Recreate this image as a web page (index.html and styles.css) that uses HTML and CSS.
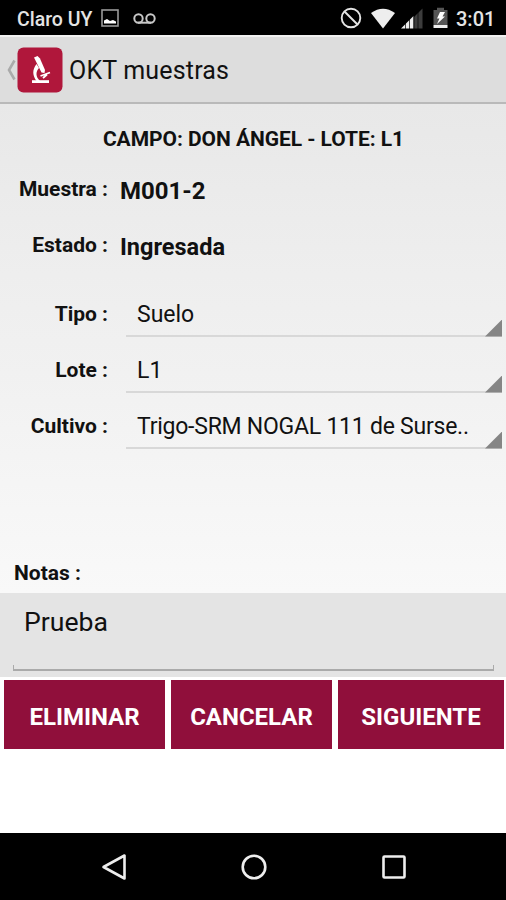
FILE: index.html
```html
<!DOCTYPE html>
<html lang="es">
<head>
<meta charset="utf-8">
<title>OKT muestras</title>
<link rel="stylesheet" href="styles.css">
</head>
<body>
<header class="status">
  <span class="carrier">Claro UY</span>
  <svg class="picture" width="18" height="18" viewBox="0 0 18 18"><rect x="1" y="1" width="16" height="16" fill="none" stroke="#999" stroke-width="1.6"/><path d="M3 14.500V11.500l3-1.500 3 2 3-1 3 1.500v2z" fill="#fff"/></svg>
  <svg class="voicemail" width="23" height="11" viewBox="0 0 23 11" fill="none" stroke="#c8c8c8" stroke-width="2"><circle cx="5.500" cy="5.500" r="4.200"/><circle cx="17.500" cy="5.500" r="4.200"/><path d="M5 9.700h13"/></svg>
  <div class="indicators">
    <svg width="22" height="22" viewBox="0 0 22 22" fill="none" stroke="#e4e4e4" stroke-width="1.900"><circle cx="11" cy="11" r="9.300"/><path d="M4.500 4.500l13 13"/></svg>
    <svg class="wifi" width="26" height="21" viewBox="0 0 26 21"><path d="M1 5Q13-3.500 25 5L13 20.500z" fill="#eee"/></svg>
    <svg class="signal" width="22" height="21" viewBox="0 0 22 21"><path d="M13 9l8.500-8.500v20H13z" fill="#3c3c3c"/><path d="M0 20.500L12.500 8v12.500z" fill="#eee"/><path d="M4.500 15v6M8.500 11v10M13 7v14M17 4v17" stroke="#000" stroke-width=".7"/></svg>
    <svg class="battery" width="15" height="22" viewBox="0 0 15 22"><path d="M.5 3H4V.8h7V3h3.500v15H.5z" fill="#555"/><path d="M.5 18h14v3H.5z" fill="#eee"/><path d="M7 5h5L9.500 9.500H12L4 17l2.500-5.500H4z" fill="#fff"/></svg>
    <span class="clock">3:01</span>
  </div>
</header>
<div class="action-bar">
  <svg class="up" width="9" height="22" viewBox="0 0 9 22"><path d="M7.500 1.500L2 11l5.500 9.500" fill="none" stroke="#aaa" stroke-width="2.600"/></svg>
  <svg class="app-icon" width="46" height="46" viewBox="0 0 46 46"><rect x=".5" y=".5" width="45" height="45" rx="6" fill="#b0173b"/><path d="M17 10.500l3.500-1.500 2.500 2.500L28 23l-.5 3-3-.5L19 14.500z" fill="#fff"/><path d="M19.500 17C15 23 15.500 28.500 19.500 34h3.500C18.500 29.500 18.500 25 22 21z" fill="#fff"/><path d="M23.500 29l9.500-3.500M30 27.500l-4 3.500" fill="none" stroke="#fff" stroke-width="1.800"/><path d="M15 33.200h17V36H15z" fill="#fff"/></svg>
  <h1 class="app-title"><span>OKT muestras</span></h1>
</div>
<main class="form">
  <h2 class="heading"><span>CAMPO: DON ÁNGEL - LOTE: L1</span></h2>
  <div class="row"><span class="label">Muestra :</span><strong class="value code">M001-2</strong></div>
  <div class="row"><span class="label">Estado :</span><strong class="value">Ingresada</strong></div>
  <div class="row pick first"><span class="label">Tipo :</span><div class="spinner"><span>Suelo</span></div></div>
  <div class="row pick"><span class="label">Lote :</span><div class="spinner"><span>L1</span></div></div>
  <div class="row pick"><span class="label">Cultivo :</span><div class="spinner"><span class="crop">Trigo-SRM NOGAL 111 de Surse..</span></div></div>
  <div class="notes-label"><span>Notas :</span></div>
</main>
<div class="notes"><div class="note-input"><span>Prueba</span></div></div>
<div class="buttons"><button><span>ELIMINAR</span></button><button><span>CANCELAR</span></button><button><span>SIGUIENTE</span></button></div>
<nav class="nav">
  <svg width="28" height="30" viewBox="0 0 28 30"><path d="M3.500 15L24.500 3.500v23z"/></svg>
  <svg width="28" height="30" viewBox="0 0 28 30"><circle cx="14" cy="15" r="11.300"/></svg>
  <svg width="28" height="30" viewBox="0 0 28 30"><rect x="3.500" y="4.500" width="21" height="21" rx="1"/></svg>
</nav>
</body>
</html>
```
FILE: styles.css
```css
* { box-sizing: border-box; }
body { margin: 0; width: 506px; height: 900px; overflow: hidden; display: flex; flex-direction: column; background: #fff; color: #111; font-family: Roboto, sans-serif; white-space: nowrap; }
svg { display: block; flex: none; }
.status { height: 35px; flex: none; background: #000; color: #e4e4e4; display: flex; align-items: center; padding: 1px 11px 0 17px; font-weight: 500; }
.carrier { font-size: 19.5px; line-height: 36px; width: 76px; padding-top: 3px; }
.picture { margin-left: 8px; }
.voicemail { margin-left: 14px; }
.indicators { margin-left: auto; display: flex; align-items: center; }
.indicators svg:first-child { margin-right: 1px; }
.wifi { margin-left: 7px; }
.signal { margin-left: 5px; }
.battery { margin-left: 10px; }
.clock { font-size: 20px; line-height: 36px; width: 39px; margin-left: 8px; padding-top: 2px; }
.action-bar { height: 69px; flex: none; background: #ddd; border-top: 2px solid #f1f1f1; border-bottom: 2px solid #b9b9b9; display: flex; align-items: center; padding-left: 7px; }
.app-icon { margin: 1px 0 0 1px; }
.app-title { margin: 2px 0 0 6px; font-size: 25px; font-weight: 400; letter-spacing: .18px; line-height: 28px; }
.form { height: 489px; flex: none; background: linear-gradient(#e8e8e8, #eee 35%, #f1f1f1 55%, #f9f9f9); display: flex; flex-direction: column; }
.heading { margin: 21px 0 0 1px; height: 28px; font-size: 21px; line-height: 28px; font-weight: 700; letter-spacing: -.05px; text-align: center; }
.row { height: 56px; flex: none; display: grid; grid-template-columns: 108px 1fr; align-items: center; column-gap: 12px; padding-top: 17px; }
.label { text-align: right; font-size: 21px; line-height: 24px; font-weight: 700; }
.row:not(.pick) .label { padding-bottom: 2px; }
.value { font-size: 23.5px; line-height: 28px; font-weight: 700; padding-top: 3px; }
.code { font-size: 24px; }
.pick { padding-top: 0; column-gap: 18px; }
.first { margin-top: 21px; }
.spinner { height: 45px; margin-right: 4px; padding-left: 11px; font-size: 23px; line-height: 46px; border-bottom: 2px solid #d8d8d8; position: relative; }
.spinner::after { content: ""; position: absolute; right: 0; bottom: -2px; width: 17px; height: 17px; background: #858585; clip-path: polygon(100% 0, 100% 100%, 0 100%); }
.crop { letter-spacing: -.24px; }
.notes-label { margin: auto 0 6px 14px; font-size: 21px; line-height: 28px; font-weight: 700; }
.notes { height: 84px; flex: none; background: #e4e4e4; padding: 0 12px 6px 13px; }
.note-input { height: 78px; padding: 13px 0 0 10px; font-size: 26.6px; line-height: 32px; border: solid #aaa; border-width: 0 1px 2px; border-image: linear-gradient(transparent 72px, #aaa 72px) 0 1 2; }
.buttons { display: grid; grid-template-columns: 161px 161px 166px; gap: 6px; padding: 3px 0 0 4px; height: 72px; flex: none; }
button { height: 69px; padding: 4px 0 0; border: 0; background: #900f3b; color: #fff; font: 700 24px/28px Roboto, sans-serif; }
.nav { margin-top: auto; height: 67px; flex: none; background: #000; display: grid; grid-template-columns: repeat(3, 28px); column-gap: 112px; padding: 19px 0 0 100px; fill: none; stroke: #eee; stroke-width: 2.6; stroke-linejoin: round; }
```
